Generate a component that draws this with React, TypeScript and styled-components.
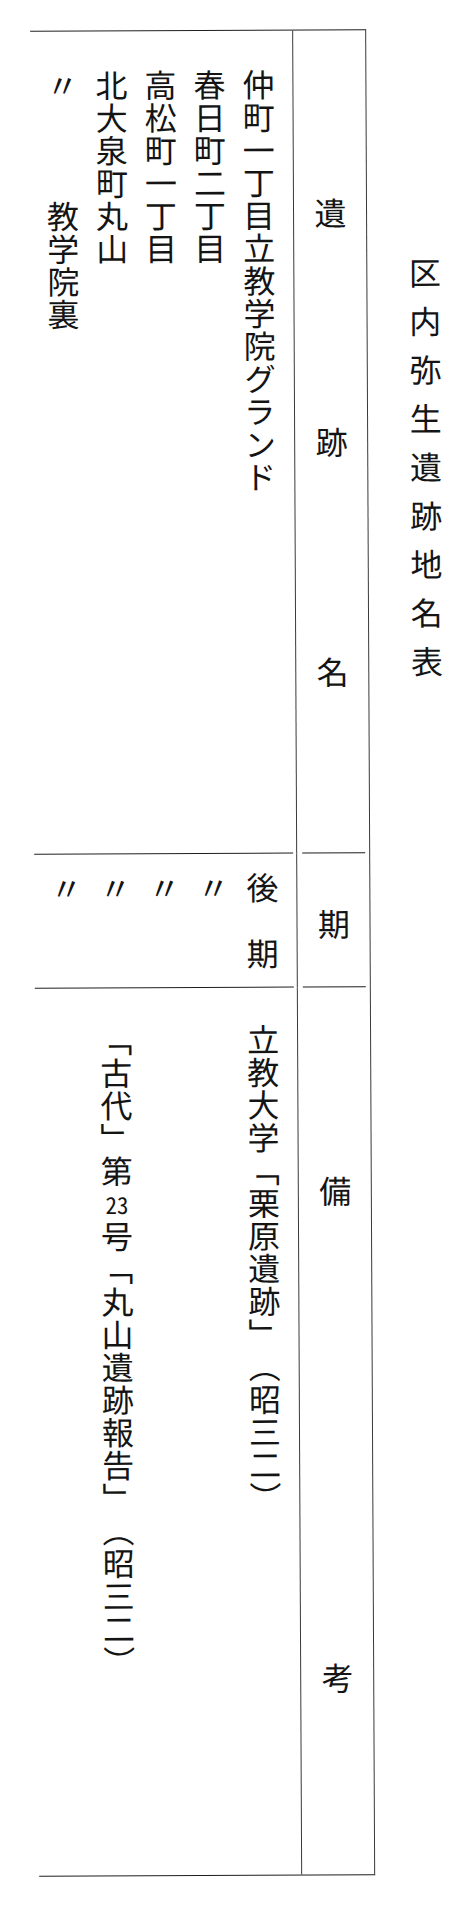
import React from 'react';
import styled, { createGlobalStyle } from 'styled-components';

const GlobalStyle = createGlobalStyle`
  html, body {
    margin: 0;
    padding: 0;
    background: #ffffff;
  }
  body {
    font-family: "Noto Sans CJK JP", "Noto Sans CJK SC", sans-serif;
    color: #141414;
  }
`;

const Page = styled.div`
  width: 470px;
  height: 1910px;
  box-sizing: border-box;
  padding: 31px 0 0 30px;
  display: flex;
  align-items: flex-start;
  background: #ffffff;
  transform: rotate(-0.28deg);
  transform-origin: 0 0;
`;

const Table = styled.div`
  display: grid;
  grid-template-columns: 263px 72px;
  grid-template-rows: 823px 134px 887px;
  width: 335px;
  border-top: 1.5px solid #1e1e1e;
  border-bottom: 1.5px solid #1e1e1e;
  border-right: 1px solid #3a3a3a;
`;

const DataCell = styled.div`
  display: flex;
  padding-right: 3px;
  border-right: 1px solid #3a3a3a;
  min-height: 0;
`;

const HeadCell = styled.div`
  display: flex;
  padding: 0 4px 0 5px;
  min-height: 0;
`;

const DataBody = styled.div<{ $rule?: boolean; $top: number; $right: number }>`
  flex: 1;
  display: flex;
  justify-content: flex-end;
  box-sizing: border-box;
  padding-top: ${(p) => p.$top}px;
  padding-right: ${(p) => p.$right}px;
  border-bottom: ${(p) => (p.$rule ? '1.5px solid #1e1e1e' : 'none')};
`;

const HeadBody = styled.div<{ $rule?: boolean; $top: number; $bottom: number; $center?: boolean }>`
  flex: 1;
  display: flex;
  flex-direction: column;
  align-items: center;
  justify-content: ${(p) => (p.$center ? 'center' : 'space-between')};
  box-sizing: border-box;
  padding-top: ${(p) => p.$top}px;
  padding-bottom: ${(p) => p.$bottom}px;
  border-bottom: ${(p) => (p.$rule ? '1.5px solid #1e1e1e' : 'none')};
`;

const HeadChar = styled.span`
  display: block;
  font-size: 32px;
  line-height: 32px;
  height: 32px;
`;

const VColumn = styled.div`
  writing-mode: vertical-rl;
  height: 100%;
  font-size: 32px;
  text-spacing-trim: space-all;
  font-kerning: none;
`;

const VLine = styled.div<{ $gap?: number; $spacing?: number }>`
  margin: 0;
  margin-block-start: ${(p) => p.$gap ?? 0}px;
  line-height: 49px;
  letter-spacing: ${(p) => p.$spacing ?? 0.7}px;
  white-space: nowrap;
`;

const Tcy = styled.span`
  text-combine-upright: all;
  font-size: 23px;
  letter-spacing: 0;
  margin-inline: 4.85px;
`;

const TitleColumn = styled.div`
  padding: 227.5px 0 0 41.7px;
`;

const Title = styled.h1`
  margin: 0;
  writing-mode: vertical-rl;
  font-size: 32px;
  font-weight: 400;
  line-height: 32px;
  letter-spacing: 16.6px;
`;

const names = [
  '仲町一丁目立教学院グランド',
  '春日町二丁目',
  '高松町一丁目',
  '北大泉町丸山',
  '〃\u3000\u3000\u3000教学院裏',
];

export default function App() {
  return (
    <>
      <GlobalStyle />
      <Page>
        <Table>
          <DataCell>
            <DataBody $rule $top={37.5} $right={7}>
              <VColumn>
                {names.map((n) => (
                  <VLine key={n}>{n}</VLine>
                ))}
              </VColumn>
            </DataBody>
          </DataCell>
          <HeadCell>
            <HeadBody $rule $top={164.8} $bottom={166}>
              <HeadChar>遺</HeadChar>
              <HeadChar>跡</HeadChar>
              <HeadChar>名</HeadChar>
            </HeadBody>
          </HeadCell>

          <DataCell>
            <DataBody $rule $top={17.5} $right={7}>
              <VColumn>
                <VLine $spacing={34}>後期</VLine>
                <VLine>〃</VLine>
                <VLine>〃</VLine>
                <VLine>〃</VLine>
                <VLine>〃</VLine>
              </VColumn>
            </DataBody>
          </DataCell>
          <HeadCell>
            <HeadBody $rule $center $top={4} $bottom={0}>
              <HeadChar>期</HeadChar>
            </HeadBody>
          </HeadCell>

          <DataCell>
            <DataBody $top={35.5} $right={7}>
              <VColumn>
                <VLine>立教大学「栗原遺跡」（昭三二）</VLine>
                <VLine $gap={98}>
                  「古代」第<Tcy>23</Tcy>号「丸山遺跡報告」（昭三二）
                </VLine>
              </VColumn>
            </DataBody>
          </DataCell>
          <HeadCell>
            <HeadBody $top={185.8} $bottom={182}>
              <HeadChar>備</HeadChar>
              <HeadChar>考</HeadChar>
            </HeadBody>
          </HeadCell>
        </Table>
        <TitleColumn>
          <Title>区内弥生遺跡地名表</Title>
        </TitleColumn>
      </Page>
    </>
  );
}
